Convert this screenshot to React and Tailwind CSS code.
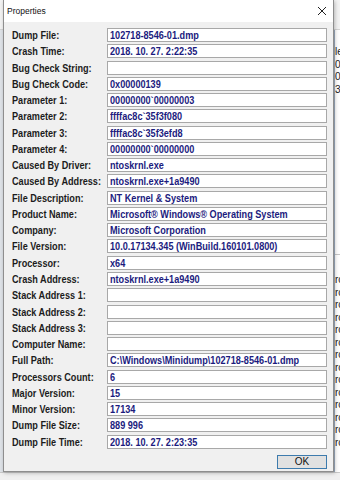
import React from 'react';

const rows = [
    ['Dump File:', '102718-8546-01.dmp'],
    ['Crash Time:', '2018. 10. 27. 2:22:35'],
    ['Bug Check String:', ''],
    ['Bug Check Code:', '0x00000139'],
    ['Parameter 1:', '00000000`00000003'],
    ['Parameter 2:', 'ffffac8c`35f3f080'],
    ['Parameter 3:', 'ffffac8c`35f3efd8'],
    ['Parameter 4:', '00000000`00000000'],
    ['Caused By Driver:', 'ntoskrnl.exe'],
    ['Caused By Address:', 'ntoskrnl.exe+1a9490'],
    ['File Description:', 'NT Kernel & System'],
    ['Product Name:', 'Microsoft® Windows® Operating System'],
    ['Company:', 'Microsoft Corporation'],
    ['File Version:', '10.0.17134.345 (WinBuild.160101.0800)'],
    ['Processor:', 'x64'],
    ['Crash Address:', 'ntoskrnl.exe+1a9490'],
    ['Stack Address 1:', ''],
    ['Stack Address 2:', ''],
    ['Stack Address 3:', ''],
    ['Computer Name:', ''],
    ['Full Path:', 'C:\\Windows\\Minidump\\102718-8546-01.dmp'],
    ['Processors Count:', '6'],
    ['Major Version:', '15'],
    ['Minor Version:', '17134'],
    ['Dump File Size:', '889 996'],
    ['Dump File Time:', '2018. 10. 27. 2:23:35'],
];

// fragments of the list window peeking out behind the dialog
const behindTop = ['le', '00', '00', '35'];
const behindList = Array.from({ length: 14 }, () => 'rc');

export default function App() {
    return (
        <div
            className="relative w-[340px] h-[480px] overflow-hidden bg-white"
            style={{ fontFamily: '"Liberation Sans", Arial, sans-serif' }}
        >
            {/* background application */}
            <div className="absolute inset-0 flex flex-col">
                <div className="h-[30px] bg-[#f3f3f3] border-b border-[#d5d5d5]"></div>
                <div className="flex-1 flex">
                    <div className="w-[3px] bg-[#dfe3e8]"></div>
                    <div className="flex-1"></div>
                    <div className="w-[6px] border-l border-[#9fb0c4] text-[10px] leading-[12.5px] text-[#222] overflow-hidden">
                        <div className="pt-[16px] flex flex-col">
                            {behindTop.map((t, i) => (
                                <span key={i}>{t}</span>
                            ))}
                        </div>
                        <div className="mt-[158px] border-t border-[#c8c8c8] flex flex-col pt-[19px]">
                            {behindList.map((t, i) => (
                                <span key={i}>{t}</span>
                            ))}
                        </div>
                    </div>
                </div>
                <div className="h-[8px] bg-[#f0f0f0] border-t border-[#c9c9c9] pl-[3px]">
                    <span className="text-[10px] leading-[10px] text-[#2a3fb5] underline">www.nirsoft.net</span>
                </div>
            </div>

            {/* Properties dialog */}
            <div className="absolute left-[3px] top-0 w-[331px] h-[472px] flex flex-col bg-[#f0f0f0] border border-t-0 border-[#8e8e8e] shadow-[1px_1px_4px_rgba(0,0,0,0.25)]">
                <div className="h-[22px] bg-white flex items-center justify-between pl-[3px] pr-[6px]">
                    <span className="text-[8.5px] text-[#111]">Properties</span>
                    <svg width="10" height="10" viewBox="0 0 10 10" className="text-[#222]">
                        <path d="M1 1 L9 9 M9 1 L1 9" stroke="currentColor" strokeWidth="1" fill="none" />
                    </svg>
                </div>

                <div className="flex-1 flex flex-col pl-[8px] pr-[6px] pt-[6px]">
                    <div className="grid grid-cols-[95px_1fr] gap-y-[2.28px]">
                        {rows.map(([label, value]) => (
                            <React.Fragment key={label}>
                                <div className="h-[14px] leading-[14px] text-[11px] font-bold text-[#1c1c1c] whitespace-nowrap">
                                    <span className="inline-block origin-left scale-x-[0.83]">{label}</span>
                                </div>
                                <div className="h-[14px] leading-[12px] bg-white border border-[#a8a8a8] pl-[2px] text-[11px] font-bold text-[#1b1b7e] whitespace-nowrap overflow-hidden">
                                    <span className="inline-block origin-left scale-x-[0.83]">{value}</span>
                                </div>
                            </React.Fragment>
                        ))}
                    </div>

                    <div className="flex justify-end mt-[6px]">
                        <button className="w-[50px] h-[14px] bg-[#e1e1e1] border border-[#3d7bad] text-[10px] leading-[12px] text-[#111]">
                            OK
                        </button>
                    </div>
                </div>
            </div>
        </div>
    );
}
